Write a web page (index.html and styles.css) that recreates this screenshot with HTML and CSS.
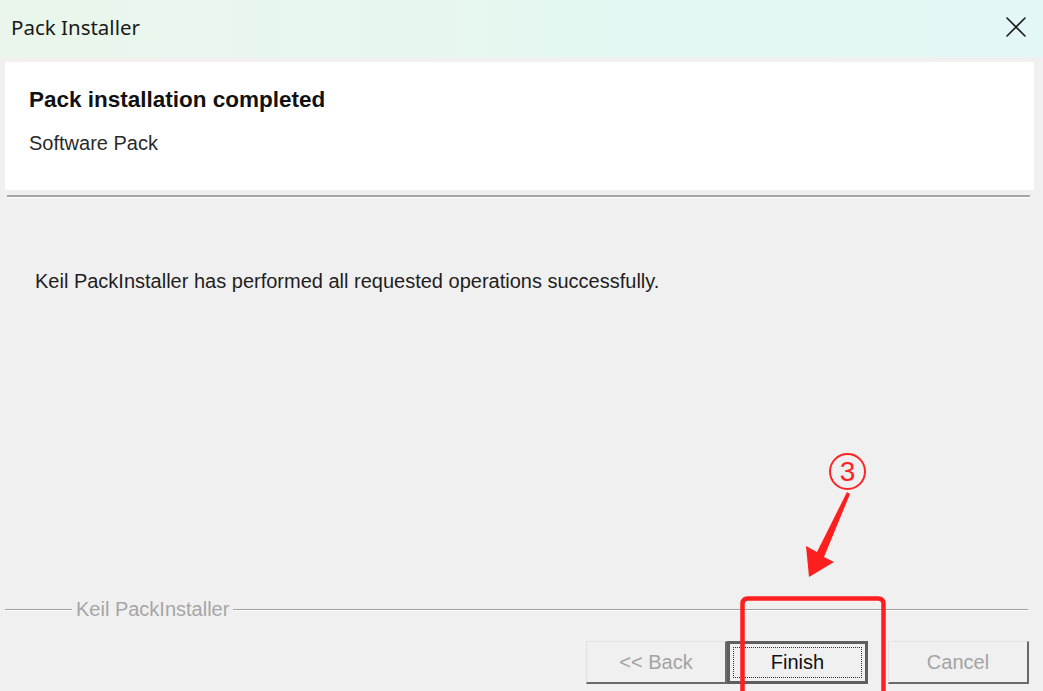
FILE: index.html
```html
<!DOCTYPE html>
<html lang="en">
<head>
  <meta charset="UTF-8" />
  <title>Pack Installer</title>
  <link rel="stylesheet" href="styles.css">
</head>
<body>
  <div class="titlebar">
    <div class="title">Pack Installer</div>
    <button class="close-btn" aria-label="Close">
      <svg width="22" height="22" viewBox="0 0 22 22" fill="none">
        <path d="M2 2L20 20M20 2L2 20" stroke="#1c1c1c" stroke-width="1.6" stroke-linecap="round"/>
      </svg>
    </button>
  </div>
  <div class="header-panel">
    <div class="header-title">Pack installation completed</div>
    <div class="header-sub">Software Pack</div>
  </div>
  <div class="etch"></div>
  <div class="message">Keil PackInstaller has performed all requested operations successfully.</div>
  <div class="group-line">
    <span class="rule short"></span>
    <span class="group-label">Keil PackInstaller</span>
    <span class="rule"></span>
  </div>
  <div class="button-row">
    <button class="win-btn disabled">&lt;&lt; Back</button>
    <button class="win-btn default"><span class="focus">Finish</span></button>
    <button class="win-btn disabled cancel">Cancel</button>
  </div>

  <!-- red annotation drawn over the dialog -->
  <div class="step-badge">3</div>
  <svg class="annotation" viewBox="0 0 1043 691" fill="none">
    <polygon points="847,492 850,494 824,557 834,562 809,577 806,546 817,552" fill="#ff1e1e"/>
    <path d="M742.5 700V604Q742.5 598.5 748 598.5H878Q883.5 598.5 883.5 604V700" stroke="#ff1e1e" stroke-width="4.5"/>
  </svg>
</body>
</html>
```

FILE: styles.css
```css
html, body {
  box-sizing: border-box;
}
body {
  margin: 0;
  width: 1043px;
  height: 691px;
  overflow: hidden;
  position: relative;
  background: #f0f0f0;
  font-family: 'Liberation Sans', Arial, sans-serif;
  color: #1a1a1a;
}
.titlebar {
  height: 57px;
  display: flex;
  align-items: center;
  justify-content: space-between;
  padding: 0 15px 0 11px;
  box-sizing: border-box;
  background: linear-gradient(90deg, #eaf6eb 0%, #e6f7f1 50%, #e2f7f6 100%);
}
.title {
  font-family: 'Noto Sans', 'Open Sans', sans-serif;
  font-size: 20.5px;
  color: #1a1a1a;
  padding-bottom: 3px;
}
.close-btn {
  border: none;
  background: transparent;
  padding: 0;
  width: 24px;
  height: 24px;
  display: flex;
  align-items: center;
  justify-content: center;
  margin-bottom: 3px;
}
.close-btn svg {
  display: block;
}
.header-panel {
  margin: 5px 9px 0 5px;
  height: 128px;
  box-sizing: border-box;
  padding: 25px 0 0 24px;
  background: #fff;
}
.header-title {
  font-size: 22.5px;
  font-weight: 700;
  line-height: 26px;
  color: #111;
}
.header-sub {
  margin-top: 19px;
  font-size: 20px;
  line-height: 23px;
  color: #2a2a2a;
}
.etch {
  margin: 5px 13px 0 7px;
  height: 0;
  border-top: 2px solid #a6a6a6;
  border-bottom: 1px solid #fff;
}
.message {
  margin-top: 72px;
  padding-left: 35px;
  font-size: 20px;
  line-height: 23px;
  color: #1e1e1e;
}
.group-line {
  margin: 305px 15px 0 5px;
  height: 23px;
  display: flex;
  align-items: center;
}
.rule {
  flex: 1;
  height: 1px;
  background: #a0a0a0;
  box-shadow: 0 1px 0 #fff;
}
.rule.short {
  flex: 0 0 67px;
}
.group-label {
  padding: 0 4px;
  font-size: 20px;
  line-height: 23px;
  color: #a6a6a6;
}
.button-row {
  margin-top: 20px;
  padding-right: 14px;
  display: flex;
  justify-content: flex-end;
}
.win-btn {
  width: 141px;
  height: 43px;
  box-sizing: border-box;
  font-family: 'Liberation Sans', Arial, sans-serif;
  font-size: 20px;
  background: #f0f0f0;
  border-style: solid;
  border-width: 1px 2px 2px 1px;
  border-color: #e2e2e2 #6a6a6a #6a6a6a #e2e2e2;
  padding: 0;
  display: flex;
  align-items: center;
  justify-content: center;
}
.win-btn.disabled {
  color: #a3a3a3;
}
.win-btn.cancel {
  margin-left: 20px;
}
.win-btn.default {
  border: 3px solid #5f5f5f;
  color: #111;
  padding: 3px;
}
.focus {
  flex: 1;
  align-self: stretch;
  display: flex;
  align-items: center;
  justify-content: center;
  border: 1px dotted #333;
}
.step-badge {
  position: absolute;
  left: 829px;
  top: 453px;
  width: 37px;
  height: 37px;
  box-sizing: border-box;
  border: 2px solid #ff2424;
  border-radius: 50%;
  display: flex;
  align-items: center;
  justify-content: center;
  font-size: 28px;
  line-height: 1;
  color: #ff2424;
}
.annotation {
  position: absolute;
  left: 0;
  top: 0;
  width: 1043px;
  height: 691px;
  pointer-events: none;
}
```
